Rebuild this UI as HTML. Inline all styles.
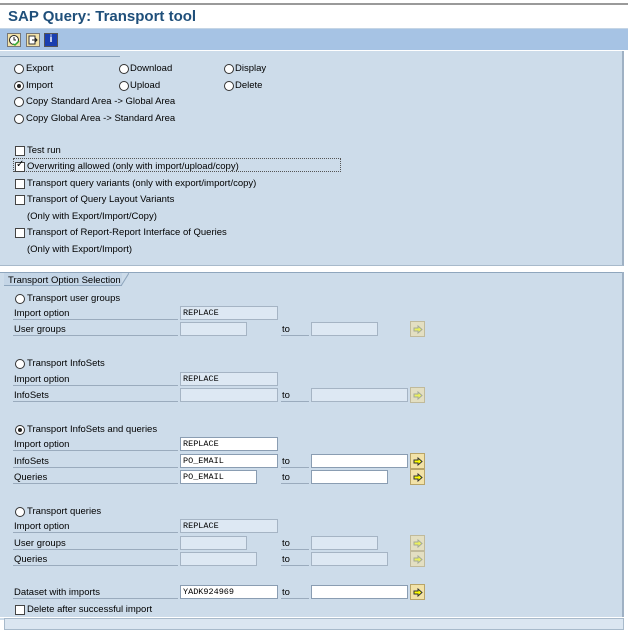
<!DOCTYPE html>
<html><head><meta charset="utf-8"><style>
*{margin:0;padding:0;box-sizing:border-box}
body{width:628px;height:630px;background:#fff;font-family:"Liberation Sans",Tahoma,sans-serif;font-size:9.5px;color:#000;position:relative;overflow:hidden}
.a{position:absolute;white-space:nowrap}
.t{position:absolute;white-space:nowrap;line-height:12px;margin-top:2px}
.rb{position:absolute;width:10px;height:10px;border:1px solid #333;border-radius:50%;background:#fff;margin-top:2px}
.rb.on::after{content:"";position:absolute;left:2px;top:2px;width:4px;height:4px;border-radius:50%;background:#222}
.cb{position:absolute;width:10px;height:10px;border:1px solid #444;background:#fff;margin-top:2px}
.lb{position:absolute;height:14px;border-bottom:1px solid #9aabbd;line-height:14px;padding-left:1px;padding-top:1px}
.f{position:absolute;height:14px;border:1px solid #a5b4c4;background:#dde8f3;font-family:"Liberation Mono",monospace;font-size:8.5px;line-height:12px;padding-left:2px}
.f.w{background:#fff;border-color:#8a9db2}
.btn{position:absolute;width:15px;height:16px;border:1px solid #b8a468;background:#f2e2a8}
.btn svg{position:absolute;left:2px;top:3px}
</style></head><body>
<div class="a" style="left:0;top:3px;width:628px;height:2px;background:#9a9a9a"></div>
<div class="a" style="left:8px;top:8px;font-size:15px;font-weight:bold;color:#1f4f7a">SAP Query: Transport tool</div>
<div class="a" style="left:0;top:28px;width:628px;height:1px;background:#c5d5e5"></div>
<div class="a" style="left:0;top:29px;width:628px;height:21px;background:#a6c3e4"></div>
<div class="a" style="left:7px;top:33px;width:14px;height:14px;background:#f2e2a8;border:1px solid #777"><svg width="12" height="12"><circle cx="6" cy="6" r="4.5" fill="#fff" stroke="#222"/><path d="M6 3V6H8" stroke="#222" fill="none"/><path d="M5 10l2 1 4-4" stroke="#3a3" stroke-width="1.5" fill="none"/></svg></div>
<div class="a" style="left:26px;top:33px;width:14px;height:14px;background:#f2e2a8;border:1px solid #777"><svg width="12" height="12"><path d="M2 2h6v8H2z" fill="#fff" stroke="#333"/><path d="M5 6h5M8 4l2 2-2 2" stroke="#222" fill="none"/></svg></div>
<div class="a" style="left:44px;top:33px;width:14px;height:14px;background:#1a3fb0;border:1px solid #555;color:#fff;font-weight:bold;font-size:10px;text-align:center;line-height:12px">i</div>

<div class="a" style="left:0;top:51px;width:624px;height:215px;background:#cddcea;border-right:2px solid #9fb1c4;border-bottom:1px solid #a8bacb"></div>
<div class="a" style="left:0;top:51px;width:120px;height:6px;border-bottom:1px solid #8fa6bd"></div>

<div class="rb" style="left:14px;top:62px"></div><div class="t" style="left:26px;top:61px">Export</div>
<div class="rb" style="left:119px;top:62px"></div><div class="t" style="left:130px;top:61px">Download</div>
<div class="rb" style="left:224px;top:62px"></div><div class="t" style="left:235px;top:61px">Display</div>
<div class="rb on" style="left:14px;top:79px"></div><div class="t" style="left:26px;top:78px">Import</div>
<div class="rb" style="left:119px;top:79px"></div><div class="t" style="left:130px;top:78px">Upload</div>
<div class="rb" style="left:224px;top:79px"></div><div class="t" style="left:235px;top:78px">Delete</div>
<div class="rb" style="left:14px;top:95px"></div><div class="t" style="left:26px;top:94px">Copy Standard Area -&gt; Global Area</div>
<div class="rb" style="left:14px;top:112px"></div><div class="t" style="left:26px;top:111px">Copy Global Area -&gt; Standard Area</div>

<div class="cb" style="left:15px;top:144px"></div><div class="t" style="left:27px;top:143px">Test run</div>
<div class="a" style="left:13px;top:158px;width:328px;height:14px;border:1px dotted #555"></div>
<div class="cb" style="left:15px;top:160px"></div><div class="a" style="left:16px;top:159px;font-size:10px">✓</div><div class="t" style="left:27px;top:159px">Overwriting allowed (only with import/upload/copy)</div>
<div class="cb" style="left:15px;top:177px"></div><div class="t" style="left:27px;top:176px">Transport query variants (only with export/import/copy)</div>
<div class="cb" style="left:15px;top:193px"></div><div class="t" style="left:27px;top:192px">Transport of Query Layout Variants</div>
<div class="t" style="left:27px;top:209px">(Only with Export/Import/Copy)</div>
<div class="cb" style="left:15px;top:226px"></div><div class="t" style="left:27px;top:225px">Transport of Report-Report Interface of Queries</div>
<div class="t" style="left:27px;top:242px">(Only with Export/Import)</div>

<div class="a" style="left:0;top:272px;width:624px;height:348px;background:#cddcea;border-right:2px solid #9fb1c4"></div>
<div class="a" style="left:0;top:272px;width:622px;height:1px;background:#8fa6bd"></div>
<div class="a" style="left:4px;top:273px;width:118px;height:13px;background:#c4d5e6;border-bottom:1px solid #8fa6bd"></div>
<div class="a" style="left:121px;top:273px;width:8px;height:13px"><svg width="8" height="13"><path d="M0 13L8 0" stroke="#8fa6bd"/></svg></div>
<div class="t" style="left:8px;top:273px">Transport Option Selection</div>

<div class="rb" style="left:15px;top:292px"></div><div class="t" style="left:27px;top:291px">Transport user groups</div>
<div class="lb" style="left:13px;top:306px;width:165px">Import option</div><div class="f" style="left:180px;top:306px;width:98px">REPLACE</div>
<div class="lb" style="left:13px;top:322px;width:165px">User groups</div><div class="f" style="left:180px;top:322px;width:67px"></div>
<div class="lb" style="left:281px;top:322px;width:28px">to</div><div class="f" style="left:311px;top:322px;width:67px"></div>
<div class="btn" style="left:410px;top:321px;opacity:.6"><svg width="10" height="9"><path d="M1 3h4V1l4 3.5-4 3.5V6H1z" fill="#ff0" stroke="#886"/></svg></div>

<div class="rb" style="left:15px;top:357px"></div><div class="t" style="left:27px;top:356px">Transport InfoSets</div>
<div class="lb" style="left:13px;top:372px;width:165px">Import option</div><div class="f" style="left:180px;top:372px;width:98px">REPLACE</div>
<div class="lb" style="left:13px;top:388px;width:165px">InfoSets</div><div class="f" style="left:180px;top:388px;width:98px"></div>
<div class="lb" style="left:281px;top:388px;width:28px">to</div><div class="f" style="left:311px;top:388px;width:97px"></div>
<div class="btn" style="left:410px;top:387px;opacity:.6"><svg width="10" height="9"><path d="M1 3h4V1l4 3.5-4 3.5V6H1z" fill="#ff0" stroke="#886"/></svg></div>

<div class="rb on" style="left:15px;top:423px"></div><div class="t" style="left:27px;top:422px">Transport InfoSets and queries</div>
<div class="lb" style="left:13px;top:437px;width:165px">Import option</div><div class="f w" style="left:180px;top:437px;width:98px">REPLACE</div>
<div class="lb" style="left:13px;top:454px;width:165px">InfoSets</div><div class="f w" style="left:180px;top:454px;width:98px">PO_EMAIL</div>
<div class="lb" style="left:281px;top:454px;width:28px">to</div><div class="f w" style="left:311px;top:454px;width:97px"></div>
<div class="btn" style="left:410px;top:453px"><svg width="10" height="9"><path d="M1 3h4V1l4 3.5-4 3.5V6H1z" fill="#ff0" stroke="#333"/></svg></div>
<div class="lb" style="left:13px;top:470px;width:165px">Queries</div><div class="f w" style="left:180px;top:470px;width:77px">PO_EMAIL</div>
<div class="lb" style="left:281px;top:470px;width:28px">to</div><div class="f w" style="left:311px;top:470px;width:77px"></div>
<div class="btn" style="left:410px;top:469px"><svg width="10" height="9"><path d="M1 3h4V1l4 3.5-4 3.5V6H1z" fill="#ff0" stroke="#333"/></svg></div>

<div class="rb" style="left:15px;top:505px"></div><div class="t" style="left:27px;top:504px">Transport queries</div>
<div class="lb" style="left:13px;top:519px;width:165px">Import option</div><div class="f" style="left:180px;top:519px;width:98px">REPLACE</div>
<div class="lb" style="left:13px;top:536px;width:165px">User groups</div><div class="f" style="left:180px;top:536px;width:67px"></div>
<div class="lb" style="left:281px;top:536px;width:28px">to</div><div class="f" style="left:311px;top:536px;width:67px"></div>
<div class="btn" style="left:410px;top:535px;opacity:.6"><svg width="10" height="9"><path d="M1 3h4V1l4 3.5-4 3.5V6H1z" fill="#ff0" stroke="#886"/></svg></div>
<div class="lb" style="left:13px;top:552px;width:165px">Queries</div><div class="f" style="left:180px;top:552px;width:77px"></div>
<div class="lb" style="left:281px;top:552px;width:28px">to</div><div class="f" style="left:311px;top:552px;width:77px"></div>
<div class="btn" style="left:410px;top:551px;opacity:.6"><svg width="10" height="9"><path d="M1 3h4V1l4 3.5-4 3.5V6H1z" fill="#ff0" stroke="#886"/></svg></div>

<div class="lb" style="left:13px;top:585px;width:165px">Dataset with imports</div><div class="f w" style="left:180px;top:585px;width:98px">YADK924969</div>
<div class="lb" style="left:281px;top:585px;width:28px">to</div><div class="f w" style="left:311px;top:585px;width:97px"></div>
<div class="btn" style="left:410px;top:584px"><svg width="10" height="9"><path d="M1 3h4V1l4 3.5-4 3.5V6H1z" fill="#ff0" stroke="#333"/></svg></div>
<div class="cb" style="left:15px;top:603px"></div><div class="t" style="left:27px;top:602px">Delete after successful import</div>

<div class="a" style="left:0;top:617px;width:624px;height:1px;background:#fff"></div>
<div class="a" style="left:4px;top:618px;width:620px;height:12px;background:#dbe6f1;border:1px solid #a8bacb"></div>
</body></html>
